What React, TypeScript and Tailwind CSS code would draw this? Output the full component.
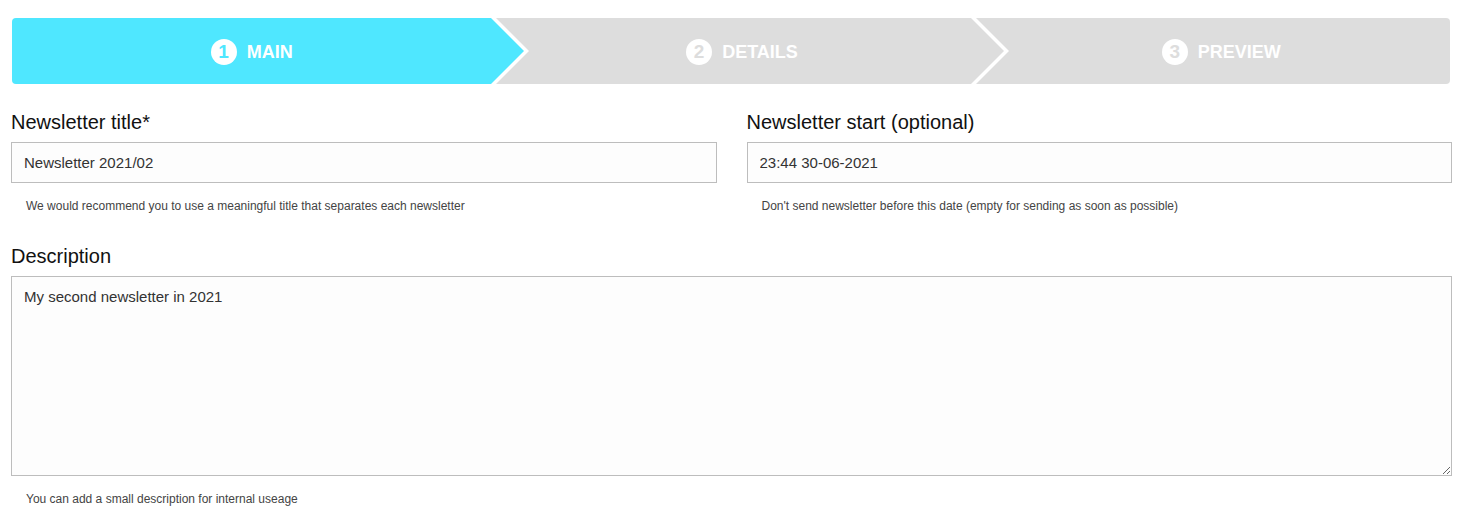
import React from 'react'

const steps = [
  { n: 1, label: 'MAIN', active: true },
  { n: 2, label: 'DETAILS', active: false },
  { n: 3, label: 'PREVIEW', active: false },
]

function Chevron({ active }: { active: boolean }) {
  return (
    <svg className="absolute left-full top-0 z-10 h-[66px] w-[40px]" viewBox="0 0 40 66" fill="none">
      <polygon points="0,0 5,0 38,33 5,66 0,66" fill="#ffffff" />
      <polygon points="0,0 33,33 0,66" fill={active ? '#4fe7ff' : '#dddddd'} />
    </svg>
  )
}

export default function App() {
  return (
    <div className="min-h-[523px] bg-white pl-[11px] pr-[14px] pt-[18px] font-['Liberation_Sans',Arial,sans-serif]">
      {/* steps */}
      <div className="ml-px mr-[2px] flex h-[66px]">
        {steps.map((s, i) => (
          <div
            key={s.n}
            className={`relative flex min-w-0 flex-1 items-center justify-center ${
              s.active ? 'bg-[#4fe7ff]' : 'bg-[#dddddd]'
            } ${i === 0 ? 'rounded-l-[4px]' : ''} ${i === steps.length - 1 ? 'rounded-r-[4px]' : ''}`}
          >
            <span className={`flex items-center gap-[10px] pt-px ${i === 0 ? '' : 'pl-[22px]'}`}>
              <span
                className={`flex h-[26px] w-[26px] items-center justify-center rounded-full bg-white text-[19px] font-bold leading-none ${
                  s.active ? 'text-[#4fe7ff]' : 'text-[#dddddd]'
                }`}
              >
                {s.n}
              </span>
              <span className="text-[18px] font-bold leading-none text-white">{s.label}</span>
            </span>
            {i < steps.length - 1 && <Chevron active={s.active} />}
          </div>
        ))}
      </div>

      <div className="mt-[26px] grid grid-cols-2 gap-[30px]">
        <div>
          <label className="block text-[20px] leading-[24px] text-[#111]">Newsletter title*</label>
          <input
            defaultValue="Newsletter 2021/02"
            className="mt-[8px] block h-[41px] w-full border border-[#bdbdbd] bg-[#fdfdfd] px-[12px] pb-px text-[15px] text-[#333] outline-none"
          />
          <p className="mt-[15px] pl-[15px] text-[12px] leading-[16px] text-[#444]">
            We would recommend you to use a meaningful title that separates each newsletter
          </p>
        </div>
        <div>
          <label className="block text-[20px] leading-[24px] text-[#111]">Newsletter start (optional)</label>
          <input
            defaultValue="23:44 30-06-2021"
            className="mt-[8px] block h-[41px] w-full border border-[#bdbdbd] bg-[#fdfdfd] px-[12px] pb-px text-[15px] text-[#333] outline-none"
          />
          <p className="mt-[15px] pl-[15px] text-[12px] leading-[16px] text-[#444]">
            Don't send newsletter before this date (empty for sending as soon as possible)
          </p>
        </div>
      </div>

      <div className="mt-[30px]">
        <label className="block text-[20px] leading-[24px] text-[#111]">Description</label>
        <textarea
          defaultValue="My second newsletter in 2021"
          className="mt-[8px] block h-[200px] w-full border border-[#bdbdbd] bg-[#fdfdfd] px-[12px] py-[10px] text-[15px] leading-[20px] text-[#333] outline-none"
        />
        <p className="mt-[15px] pl-[15px] text-[12px] leading-[16px] text-[#444]">
          You can add a small description for internal useage
        </p>
      </div>
    </div>
  )
}
